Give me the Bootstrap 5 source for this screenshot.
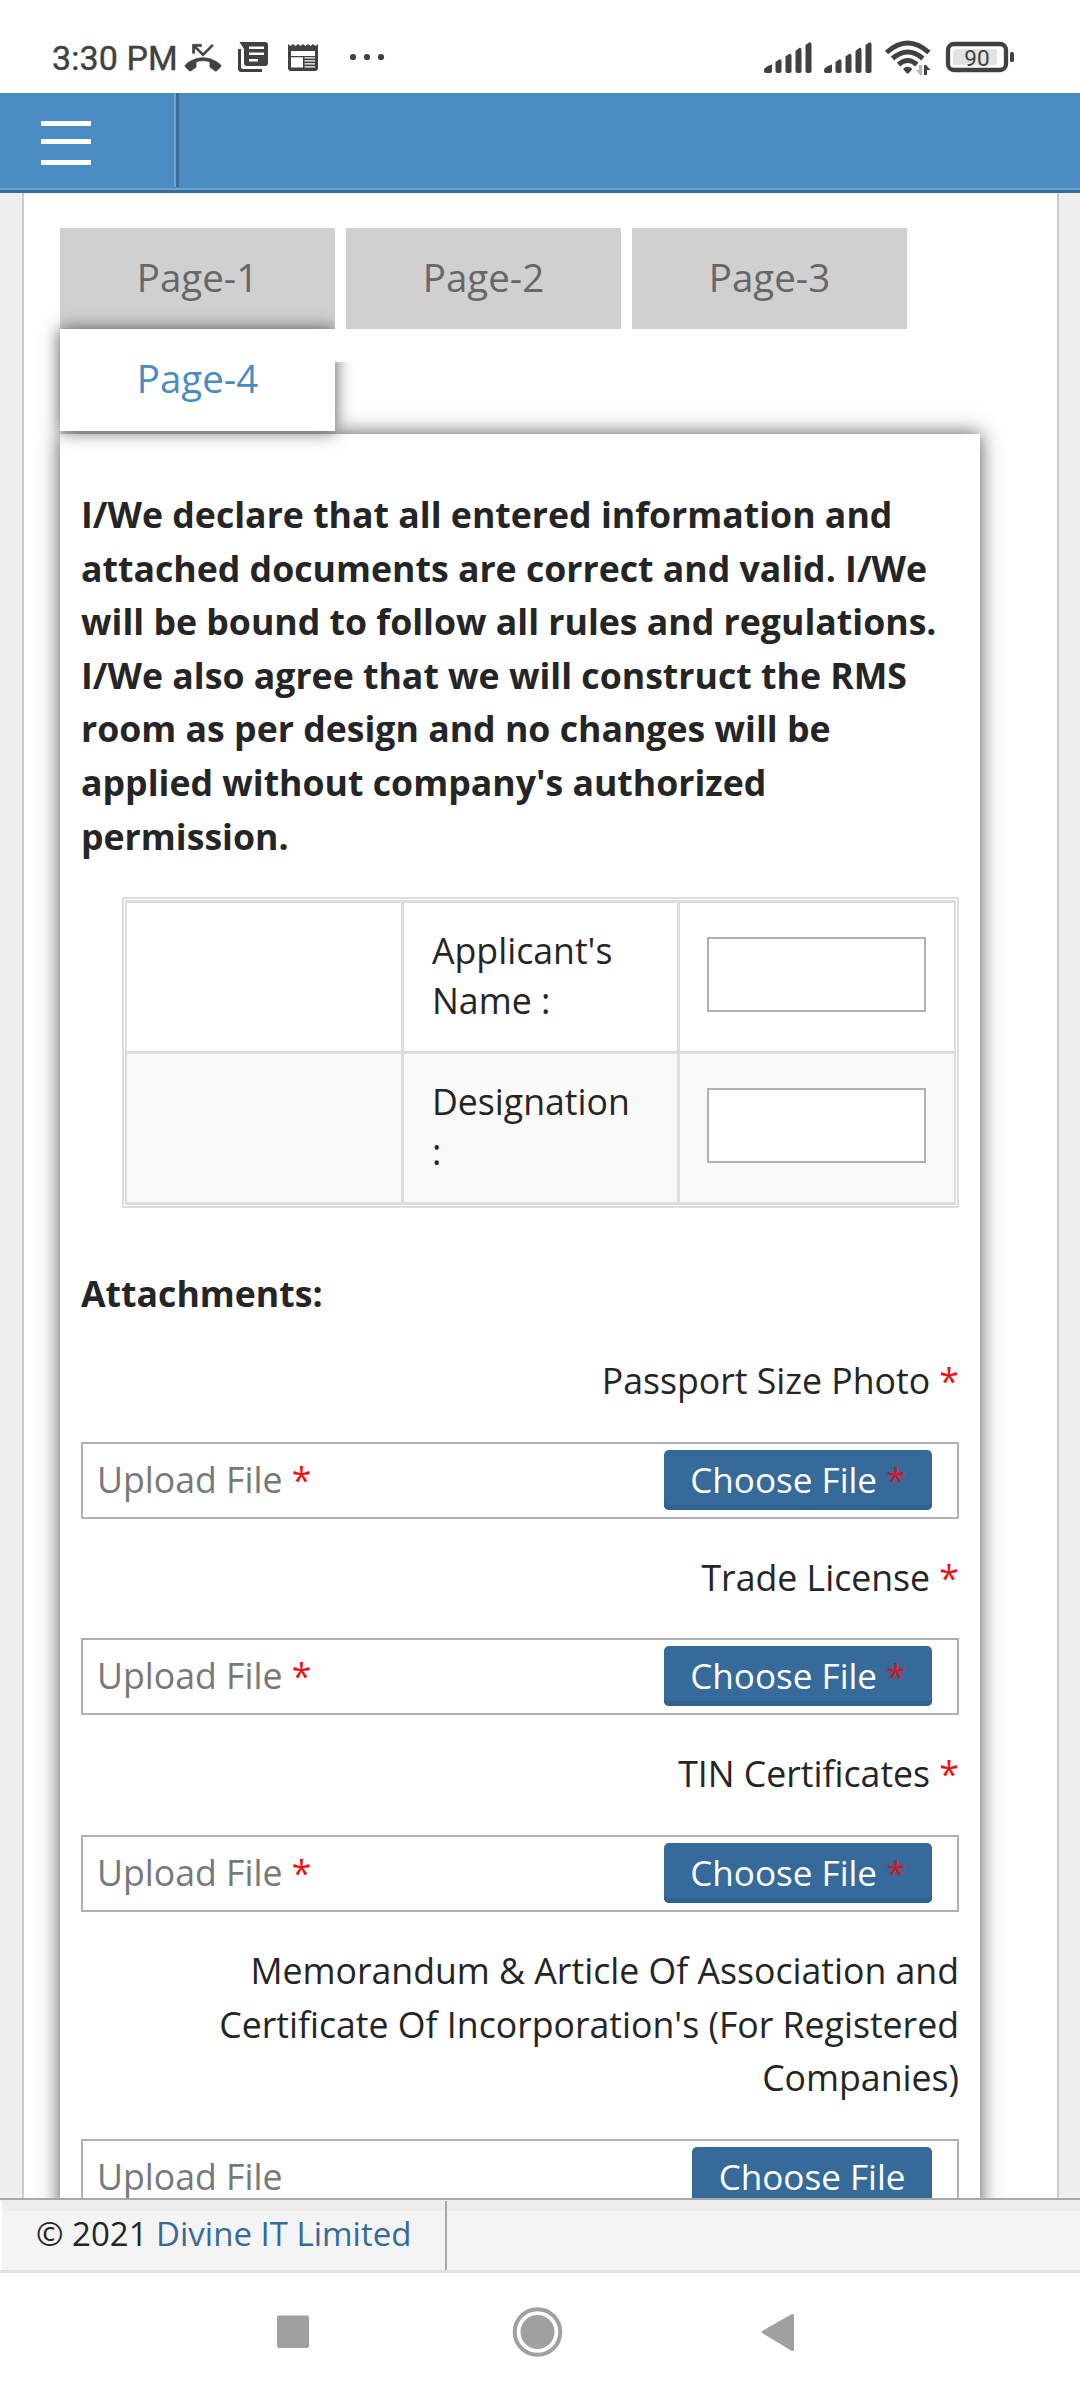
<!DOCTYPE html>
<html lang="en">
<head>
<meta charset="utf-8">
<meta name="viewport" content="width=device-width, initial-scale=1">
<title>Declaration</title>
<link href="https://cdn.jsdelivr.net/npm/bootstrap@5.3.0/dist/css/bootstrap.min.css" rel="stylesheet">
<style>
  body { height: 2400px; font-family: "Open Sans", "Noto Sans", sans-serif; font-size: 35.65px; line-height: 53.6px; color: #252525; background: #fefefe; }
  svg { display: block; }
  /* phone status bar */
  .status-bar { height: 93px; padding: 36px 66px 0 52px; font-family: Roboto, sans-serif; color: #414141; }
  .clock { font-size: 34px; font-weight: 400; -webkit-text-stroke: .4px #414141; line-height: 44px; width: 131px; white-space: nowrap; letter-spacing: .1px; }
  /* header */
  .top-bar { height: 100px; background: #4a8bc2; border-bottom: 3px solid #3a6c99; box-shadow: inset 0 -2px #6ba3d3; }
  .menu-cell { width: 179px; height: 94px; padding: 28px 0 0 41px; border-right: 3px solid #3a6c99; box-shadow: inset -2px 0 #6ba3d3; }
  .menu-cell i { display: block; width: 50px; height: 5px; background: #fff; margin-bottom: 13px; }
  .menu-cell i:nth-child(2) { margin-bottom: 16px; }
  /* page */
  .page-area { background: #efefef; padding: 0 21px 0 22px; min-height: 0; }
  .page-body { height: 2005px; background: #fefefe; border: solid #ccc; border-width: 0 2px; padding: 35px 77px 0 36px; }
  .wizard-tabs { column-gap: 11px; margin-right: -20px; }
  .wizard-tabs .tab-link { width: 275px; height: 101px; padding-bottom: 2px; background: #d0d0d0; color: #676767; font-size: 38.5px; border-radius: 0; }
  .wizard-tabs .tab-link.active { height: 102px; background: #fff; color: #4a8bc2; box-shadow: 0 0 16px #555; z-index: 1;
    clip-path: polygon(-40px -40px, 275px -40px, 275px 33px, 330px 33px, 330px 140px, -40px 140px); }
  .wizard-panel { margin-top: 3px; height: 1900px; background: #fefefe; box-shadow: 0 0 19px #555; padding: 54px 21px 0; }
  .statement { margin: 0 0 34px; white-space: nowrap; }
  .sign-box { margin-left: 41px; border: 2px solid #ddd; padding: 1px; height: 311px; }
  .sign-grid { width: 100%; height: 305px; border-collapse: separate; border-spacing: 0; table-layout: fixed; line-height: 50px; border: solid #ddd; border-width: 3px 2px; }
  .sign-grid td { height: 148px; padding: 22px 28px 0; vertical-align: top; }
  .sign-grid td + td { border-left: 3px solid #ddd; }
  .sign-grid tr + tr td { height: 151px; background: #f9f9f9; border-top: 3px solid #ddd; }
  .sign-grid td:last-child { padding-left: 27px; }
  .sign-grid .form-control { height: 75px; border: 2px solid #b1b1b1; border-radius: 0; margin-top: 12px; background: #fff; }
  .attach-title { margin: 59px 0 33.5px; }
  .req { color: #e11; }
  .file-label { margin-bottom: 34px; }
  .file-box { height: 77px; border: 2px solid #b1b1b1; margin-bottom: 32px; padding: 6px 25px 0 14px; color: #787878; }
  .file-box > span { line-height: 59px; }
  .btn-file { height: 60px; border: 0; border-radius: 5px; background: #356a9a; color: #fff; font-size: 35.1px; line-height: 54px; padding: 0 26.500px 2px; box-shadow: inset 0 -5px #306291; }
  .btn-file .req { color: #d8131f; }
  /* footer */
  .site-footer { height: 75px; border-top: 2px solid #a9a9a9; border-bottom: 3px solid #e0e0e0; background: linear-gradient(#ededed 11px, #f4f4f4 11px); font-size: 33px; line-height: 66px; }
  .copy-cell { width: 447px; height: 69px; margin-top: 1px; border-left: 2px solid #fff; border-right: 2px solid #a9a9a9; padding-left: 34px; white-space: nowrap; }
  .copy-cell a { color: #356a9a; text-decoration: none; }
  .nav-keys { height: 127px; padding-left: 277px; padding-bottom: 9px; }
</style>
<script src="https://cdn.jsdelivr.net/npm/bootstrap@5.3.0/dist/js/bootstrap.bundle.min.js"></script>
</head>
<body class="d-flex flex-column overflow-hidden">

<div class="status-bar d-flex justify-content-between flex-shrink-0">
  <div class="d-flex">
    <span class="clock">3:30 PM</span>
    <svg width="204" height="44" viewBox="183 36 204 44" fill="#414141">
      <path transform="translate(185 39.8) scale(1.5)" d="M6.5 5.5L12 11l7-7-1-1-6 6-4.500-4.500H11V3H5v6h1.500z M23.710 16.670C20.660 13.780 16.540 12 12 12S3.340 13.780.290 16.670c-.18.18-.29.43-.29.71s.11.53.29.71l2.480 2.480c.18.18.43.29.71.29.27 0 .52-.11.7-.28.79-.74 1.690-1.360 2.660-1.850.33-.16.56-.5.56-.9v-3.100c1.450-.48 3-.73 4.600-.73s3.150.25 4.600.72v3.100c0 .39.23.74.56.9.98.49 1.870 1.120 2.670 1.850.18.18.43.28.7.28.28 0 .53-.11.71-.29l2.480-2.480c.18-.18.29-.43.29-.71s-.12-.52-.3-.7z" stroke="#414141" stroke-width=".4"/>
      <path d="M238 49h3v17.500q0 2.500 2.500 2.500H262v3h-20.500q-3.500 0-3.500-3.500z"/>
      <path fill-rule="evenodd" d="M239.500 42H265q3 0 3 3v18q0 3-3 3h-18q-3 0-3-3V49zM249 46.500v2.500h15v-2.500zm0 6v2.500h15v-2.500zm0 6.500v2.500h9V59z"/>
      <path fill-rule="evenodd" d="M288 44l2.500 2 2.500-2 2.500 2 2.500-2 2.500 2 2.500-2 2.500 2 2.500-2 2.500 2 2.500-2 2.500 2 2.500-2v24q0 3-3 3h-24q-3 0-3-3zM291 51v5h24v-5zm0 6.200v10.300h12V57.200zm13.500 0v1.300H315v-1.300zm0 3v1.300H315v-1.300zm0 3v1.300H315v-1.300zm0 3v1.300H315v-1.300z"/>
      <circle cx="353" cy="57" r="3.100"/><circle cx="367" cy="57" r="3.100"/><circle cx="381" cy="57" r="3.100"/>
    </svg>
  </div>
  <svg width="254" height="44" viewBox="760 36 254 44" fill="#414141">
    <g id="bars">
      <path d="M764 70q0-3 8-5.500V71q0 2-2 2h-4q-2 0-2-2z"/>
      <path d="M775.500 62l4-2.700q2 0 2 2V71q0 2-2 2h-2q-2 0-2-2z"/>
      <path d="M785.500 56.500l4-2.800q2 0 2 2V71q0 2-2 2h-2q-2 0-2-2z"/>
      <path d="M795.500 51l4-3.300q2 0 2 2V71q0 2-2 2h-2q-2 0-2-2z"/>
      <path d="M805.500 45l4-2.700q2 0 2 2V71q0 2-2 2h-2q-2 0-2-2z"/>
    </g>
    <use href="#bars" x="60"/>
    <g fill="none" stroke="#414141" stroke-width="5">
      <path d="M886.500 52.500q21.200-19 42.400 0"/><path d="M892.500 58.500q15.200-13 30.400 0"/><path d="M898.500 64.500q9.200-8 18.400 0"/>
    </g>
    <path d="M903 69q4.700-4.500 9.400 0l-3.500 4q-1.200 1.200-2.400 0z"/>
    <path fill="#b5b5b5" d="M922 65v10h-2l-4-5h3v-5z"/>
    <path d="M924 75V65h2l4.500 5H927v5z"/>
    <rect x="948" y="44" width="58" height="26" rx="6" fill="none" stroke="#414141" stroke-width="4.300"/>
    <rect x="953" y="49" width="44" height="16" rx="2" fill="#e3e3e3"/>
    <rect x="1010" y="52" width="4" height="10" rx="1.500"/>
    <text x="977" y="65.500" font-size="22.500" text-anchor="middle">90</text>
  </svg>
</div>

<header class="top-bar flex-shrink-0">
  <div class="menu-cell"><i></i><i></i><i></i></div>
</header>

<main class="page-area flex-grow-1 overflow-hidden">
  <div class="page-body">
    <nav class="wizard-tabs d-flex flex-wrap">
      <div class="tab-link d-flex align-items-center justify-content-center">Page-1</div>
      <div class="tab-link d-flex align-items-center justify-content-center">Page-2</div>
      <div class="tab-link d-flex align-items-center justify-content-center">Page-3</div>
      <div class="tab-link active position-relative d-flex align-items-center justify-content-center">Page-4</div>
    </nav>
    <section class="wizard-panel">
      <p class="statement fw-bold">I/We declare that all entered information and<br>attached documents are correct and valid. I/We<br>will be bound to follow all rules and regulations.<br>I/We also agree that we will construct the RMS<br>room as per design and no changes will be<br>applied without company's authorized<br>permission.</p>

      <div class="sign-box">
        <table class="sign-grid">
          <colgroup><col style="width:274px"><col style="width:276px"><col></colgroup>
          <tr><td></td><td>Applicant's Name :</td><td><input class="form-control" type="text"></td></tr>
          <tr><td></td><td>Designation<br>:</td><td><input class="form-control" type="text"></td></tr>
        </table>
      </div>

      <p class="attach-title fw-bold">Attachments:</p>

      <div class="file-label text-end">Passport Size Photo <span class="req">*</span></div>
      <div class="file-box d-flex justify-content-between align-items-start"><span>Upload File <span class="req">*</span></span><button class="btn btn-file" type="button">Choose File <span class="req">*</span></button></div>

      <div class="file-label text-end">Trade License <span class="req">*</span></div>
      <div class="file-box d-flex justify-content-between align-items-start"><span>Upload File <span class="req">*</span></span><button class="btn btn-file" type="button">Choose File <span class="req">*</span></button></div>

      <div class="file-label text-end">TIN Certificates <span class="req">*</span></div>
      <div class="file-box d-flex justify-content-between align-items-start"><span>Upload File <span class="req">*</span></span><button class="btn btn-file" type="button">Choose File <span class="req">*</span></button></div>

      <div class="file-label text-end">Memorandum &amp; Article Of Association and<br>Certificate Of Incorporation's (For Registered<br>Companies)</div>
      <div class="file-box d-flex justify-content-between align-items-start"><span>Upload File</span><button class="btn btn-file" type="button">Choose File</button></div>
    </section>
  </div>
</main>

<footer class="site-footer flex-shrink-0">
  <div class="copy-cell">© 2021 <a href="#">Divine IT Limited</a></div>
</footer>

<div class="nav-keys d-flex align-items-center flex-shrink-0">
  <svg width="520" height="56" viewBox="277 2304 520 56" fill="#a0a0a0">
    <rect x="277" y="2315.500" width="32" height="32.500" rx="2"/>
    <circle cx="537.500" cy="2332" r="22.800" fill="none" stroke="#a0a0a0" stroke-width="4"/>
    <circle cx="537.500" cy="2332" r="17"/>
    <path d="M763 2330.500l28-16q3-1.500 3 1.500v33q0 3-3 1.500l-28-17q-2.500-1.500 0-3z"/>
  </svg>
</div>
</body>
</html>
